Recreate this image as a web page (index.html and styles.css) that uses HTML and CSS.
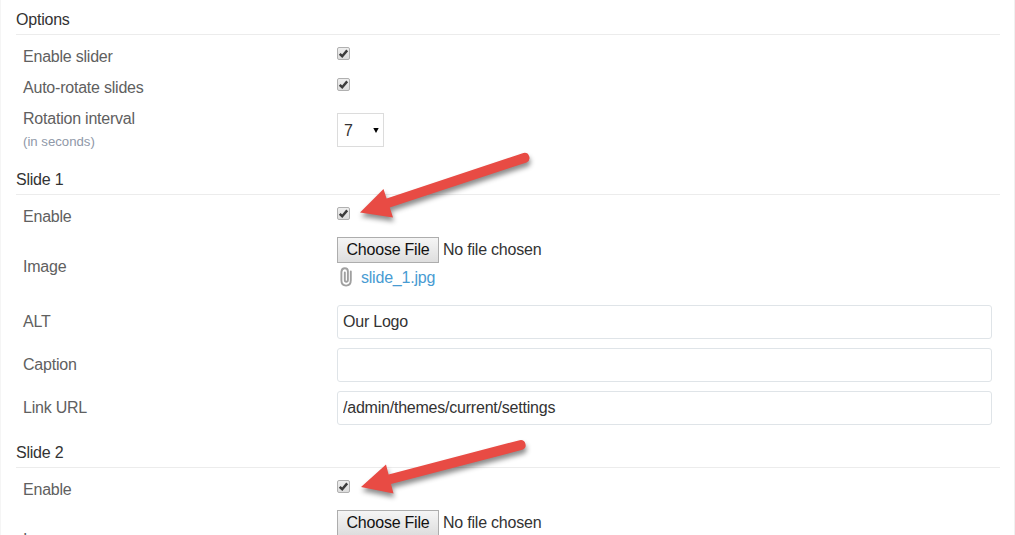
FILE: index.html
```html
<!DOCTYPE html>
<html lang="en">
<head>
<meta charset="utf-8">
<title>Slider settings</title>
<link rel="stylesheet" href="styles.css">
</head>
<body>
<svg class="defs" width="0" height="0" aria-hidden="true">
  <defs>
    <symbol id="check" viewBox="0 0 13 13"><path d="M2.7 6.8 5.2 9.2 10.2 3.4" fill="none" stroke="#3c3c3c" stroke-width="2.5"/></symbol>
  </defs>
</svg>
<main class="panel">
  <section class="group">
    <h2 class="heading">Options</h2>
    <div class="row">
      <span class="label">Enable slider</span>
      <span class="field"><span class="checkbox"><svg width="13" height="13"><use href="#check"/></svg></span></span>
    </div>
    <div class="row">
      <span class="label">Auto-rotate slides</span>
      <span class="field"><span class="checkbox"><svg width="13" height="13"><use href="#check"/></svg></span></span>
    </div>
    <div class="row row-interval">
      <span class="label">Rotation interval<small class="hint">(in seconds)</small></span>
      <span class="field"><span class="select"><span class="value">7</span><svg class="caret" width="6" height="5" viewBox="0 0 6 5"><path d="M.3 0H5.7L3 5Z"/></svg></span></span>
    </div>
  </section>
  <section class="group group-slide">
    <h2 class="heading">Slide 1</h2>
    <div class="row">
      <span class="label">Enable</span>
      <span class="field"><span class="checkbox"><svg width="13" height="13"><use href="#check"/></svg></span></span>
    </div>
    <div class="row row-image">
      <span class="label">Image</span>
      <div class="field">
        <div class="file"><button class="choose" type="button">Choose File</button><span>No file chosen</span></div>
        <div class="attachment">
          <svg class="clip" width="14" height="20" viewBox="0 0 14 20" fill="none" stroke="#a0a0a0" stroke-width="1.9" stroke-linecap="round"><path d="M4.8 5.5V13Q4.8 14.8 6.3 14.8T7.9 13V4.5Q7.9 1.2 4.8 1.2T1.4 4.8V13.3Q1.4 18.6 6.1 18.6T10.8 13.3V4.5"/></svg>
          <a class="link">slide_1.jpg</a>
        </div>
      </div>
    </div>
    <div class="row row-text"><span class="label">ALT</span><input class="input" type="text" value="Our Logo"></div>
    <div class="row row-text"><span class="label">Caption</span><input class="input" type="text" value=""></div>
    <div class="row row-text"><span class="label">Link URL</span><input class="input" type="text" value="/admin/themes/current/settings"></div>
  </section>
  <section class="group">
    <h2 class="heading">Slide 2</h2>
    <div class="row">
      <span class="label">Enable</span>
      <span class="field"><span class="checkbox"><svg width="13" height="13"><use href="#check"/></svg></span></span>
    </div>
    <div class="row row-image">
      <span class="label">Image</span>
      <div class="field"><div class="file"><button class="choose" type="button">Choose File</button><span>No file chosen</span></div></div>
    </div>
  </section>
</main>
<svg class="arrows" width="1015" height="535" viewBox="0 0 1015 535">
  <g fill="#e84b44">
    <path d="M360 212.5 383.5 189 386.6 198.6 523.4 153A5 5 0 0 1 526.6 162.4L389.8 207.6 393 217.5Z"/>
    <path d="M361 487 386 464.5 388.6 474.6 519.6 440.2A5 5 0 0 1 522.3 449.8L391 484 393.5 493.5Z"/>
  </g>
</svg>
</body>
</html>
```

FILE: styles.css
```css
body {
  margin: 0;
  height: 535px;
  overflow: hidden;
  background: #fff;
  color: #333;
  font: 16px/18px "Liberation Sans", Arial, sans-serif;
  letter-spacing: -.22px;
}

.defs {
  position: absolute;
}

.panel {
  box-sizing: border-box;
  height: 535px;
  padding: 0 14px 0 15px;
  border-left: 1px solid #f5f5f5;
  border-right: 1px solid #f0f0f0;
  overflow: hidden;
}

.group {
  height: 160px;
}

.group-slide {
  height: 273px;
}

.heading {
  box-sizing: border-box;
  height: 35px;
  margin: 0 0 6px;
  padding-top: 11px;
  border-bottom: 1px solid #ececec;
  font-size: inherit;
  font-weight: normal;
}

.row {
  display: grid;
  grid-template-columns: 314px 655px;
  align-items: center;
  height: 31px;
  padding-left: 7px;
}

.label {
  padding-top: 1px;
  color: #606060;
}

.checkbox {
  display: block;
  box-sizing: border-box;
  width: 13px;
  height: 13px;
  margin-bottom: 6px;
  border: 1px solid #b0b0b0;
  border-radius: 2px;
  background: linear-gradient(#eee, #dcdcdc);
}

.checkbox svg {
  display: block;
  margin: -1px;
}

.row-interval {
  height: 54px;
}

.hint {
  display: block;
  margin-top: 5px;
  color: #8f98a8;
  font-size: 13.2px;
  letter-spacing: 0;
}

.select {
  display: flex;
  align-items: center;
  justify-content: space-between;
  box-sizing: border-box;
  width: 47px;
  height: 34px;
  padding: 0 4px 0 6px;
  border: 1px solid #dcdcdc;
}

.value {
  padding-top: 2px;
}

.row-image {
  height: 68px;
}

.row-image .field {
  align-self: start;
  padding-top: 5px;
}

.file {
  display: flex;
  align-items: center;
  gap: 4px;
}

.choose {
  box-sizing: border-box;
  width: 102px;
  height: 26px;
  padding: 0;
  border: 1px solid #adadad;
  background: linear-gradient(#f5f5f5, #dedede);
  color: #111;
  font: inherit;
  letter-spacing: inherit;
}

.attachment {
  display: flex;
  align-items: center;
  gap: 7px;
  margin-top: 4px;
  padding-left: 3px;
}

.link {
  padding-top: 2px;
  color: #489bd2;
}

.row-text {
  height: 43.2px;
}

.input {
  box-sizing: border-box;
  width: 655px;
  height: 34px;
  padding: 1px 5px 0;
  border: 1px solid #dfe4e8;
  border-radius: 3px;
  color: #333;
  font: inherit;
  letter-spacing: inherit;
}

.arrows {
  position: absolute;
  top: 0;
  left: 0;
  pointer-events: none;
  filter: drop-shadow(1px 4px 2.5px rgba(0, 0, 0, .45));
}
```
